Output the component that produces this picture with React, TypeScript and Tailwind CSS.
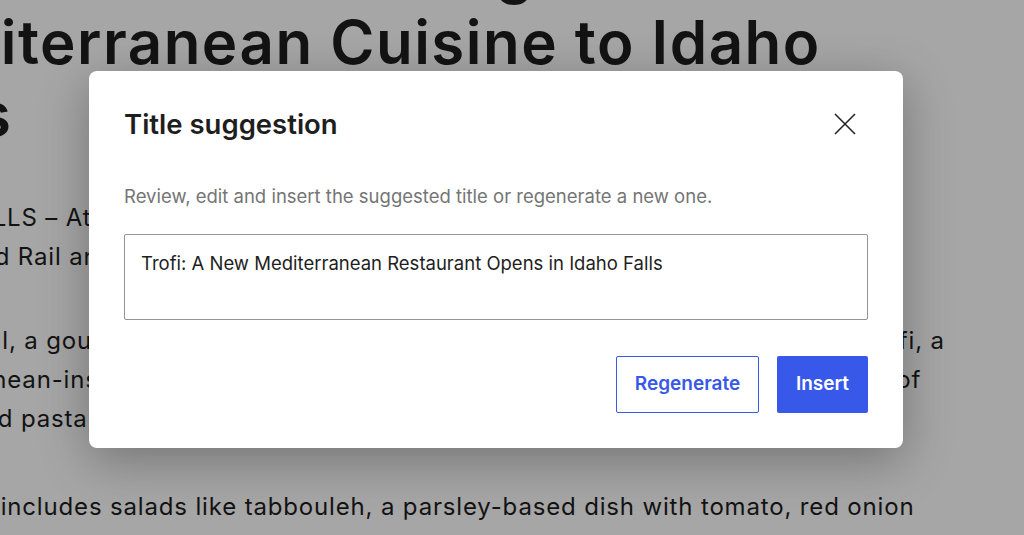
function CloseIcon() {
  return (
    <svg width="22" height="22" viewBox="0 0 22 22" fill="none" stroke="#1e1e1e" strokeWidth="1.5">
      <path d="M1 1L21 21M21 1L1 21" />
    </svg>
  )
}

export default function App() {
  return (
    <div className="relative h-[535px] w-[1024px] overflow-hidden bg-white font-['Inter',sans-serif]">
      {/* article behind the modal, scrolled so its left side is out of view */}
      <article className="-mt-[66px] text-[#1e1e1e]">
        <h1 className="-ml-[132px] text-[60px] font-semibold leading-[72px] tracking-[0.025em]">
          <span className="block whitespace-nowrap">Trofi Restaurant Brings</span>
          <span className="block whitespace-nowrap">Mediterranean Cuisine to Idaho</span>
          <span className="ml-[4px] block whitespace-nowrap">Falls</span>
        </h1>

        <div className="-ml-[125px] text-[24px] leading-[39px] tracking-[0.035em]">
          <p className="mt-[48px]">
            <span className="block whitespace-nowrap">IDAHO FALLS – At the corner of Park Avenue, the old</span>
            <span className="ml-[42px] block whitespace-nowrap">Bar and Rail and Brew House has new tenants.</span>
          </p>

          <p className="mt-[45px]">
            <span className="-ml-[75px] block whitespace-nowrap">Brewery and Grill, a gourmet burgers joint in a historic downtown strip, is now home to Trofi, a</span>
            <span className="block whitespace-nowrap">Mediterranean-inspired restaurant and bar which serves up a broad, flavorful menu of</span>
            <span className="ml-[46px] block whitespace-nowrap">and red pasta, flatbreads and grilled meats.</span>
          </p>

          <p className="mt-[49px]">
            <span className="-ml-[19px] block whitespace-nowrap">Their menu includes salads like tabbouleh, a parsley-based dish with tomato, red onion</span>
          </p>
        </div>
      </article>

      {/* overlay + modal */}
      <div className="absolute inset-0 bg-black/35 pl-[89px] pt-[71px]">
        <div className="w-[814px] rounded-lg bg-white px-[35px] pb-[35px] pt-[37px] shadow-[0_12px_50px_rgba(0,0,0,0.3)]">
          <header className="flex h-8 items-center justify-between">
            <h2 className="text-[27.5px] font-semibold leading-8 text-[#1e1e1e]">Title suggestion</h2>
            <button className="mr-[12px]">
              <CloseIcon />
            </button>
          </header>

          <p className="mt-[43px] text-[18.5px] leading-[26px] text-[#757575]">
            Review, edit and insert the suggested title or regenerate a new one.
          </p>

          <textarea
            readOnly
            defaultValue="Trofi: A New Mediterranean Restaurant Opens in Idaho Falls"
            className="mt-[25px] block h-[86px] w-full resize-none rounded-[2px] border border-[#949494] px-4 py-[15px] text-[18.5px] leading-[26px] text-[#1e1e1e] outline-none"
          />

          <div className="mt-[36px] flex justify-end gap-[18px]">
            <button className="h-[57px] w-[143px] rounded-[2px] border border-[#3858e9] text-[19px] font-semibold text-[#3858e9]">
              Regenerate
            </button>
            <button className="h-[57px] w-[91px] rounded-[2px] bg-[#3858e9] text-[19px] font-semibold text-white">
              Insert
            </button>
          </div>
        </div>
      </div>
    </div>
  )
}
